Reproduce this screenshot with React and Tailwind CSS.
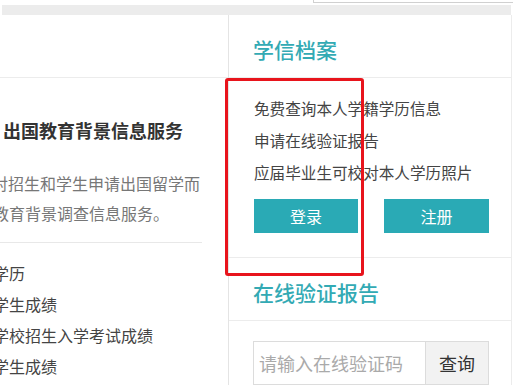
import React from 'react';

const listItems = ['学历', '学生成绩', '学校招生入学考试成绩', '学生成绩'];

const features = ['免费查询本人学籍学历信息', '申请在线验证报告', '应届毕业生可校对本人学历照片'];

export default function App() {
  return (
    <div className="relative w-[513px] h-[386px] overflow-hidden bg-white font-['Noto_Sans_CJK_SC','Noto_Sans',sans-serif]">
      {/* top strip */}
      <div className="h-[5px] flex justify-end">
        <div className="w-[200px] h-[3px] border-l border-b border-[#d0d0d0]" />
      </div>
      <div className="h-[10px] mx-[2px] bg-[#ececec]" />

      <div className="flex">
        {/* left column */}
        <div className="w-[229px] shrink-0 border-r border-[#e4e4e4] overflow-hidden">
          <div className="h-[63px] border-b border-[#ececec]" />
          <h2 className="pt-[40px] pl-[3px] text-[18px] leading-[24px] font-bold text-[#333] whitespace-nowrap">
            出国教育背景信息服务
          </h2>
          <div className="mt-[26px] pb-[14px] w-[202px] border-b border-[#e8e8e8] text-[16px] leading-[30px] text-[#777] whitespace-nowrap">
            <div className="-ml-[8px]">对招生和学生申请出国留学而</div>
            <div className="-ml-[7px]">教育背景调查信息服务。</div>
          </div>
          <ul className="mt-[15px] -ml-[7px] text-[16px] leading-[31px] text-[#444] whitespace-nowrap">
            {listItems.map((item, i) => (
              <li key={i}>{item}</li>
            ))}
          </ul>
        </div>

        {/* right column */}
        <div className="flex-1 mr-[1px] border-r border-[#ececec]">
          <div className="border-b border-[#ececec] pl-[24px] pt-[22px] pb-[16px]">
            <h3 className="text-[21px] leading-[24px] font-medium text-[#33aab4]">学信档案</h3>
          </div>
          <div className="pl-[25px] pt-[14px] pb-[24px] border-b border-[#ececec]">
            {features.map((f) => (
              <div key={f} className="text-[15.6px] leading-[32px] text-[#444] whitespace-nowrap">
                {f}
              </div>
            ))}
            <div className="mt-[11px] flex gap-[26px]">
              <button className="w-[104px] h-[34px] bg-[#2aaab5] text-white text-[16px]">登录</button>
              <button className="w-[105px] h-[34px] bg-[#2aaab5] text-white text-[16px]">注册</button>
            </div>
          </div>
          <div className="border-b border-[#ececec] pl-[24px] pt-[22px] pb-[16px]">
            <h3 className="text-[21px] leading-[24px] font-medium text-[#33aab4]">在线验证报告</h3>
          </div>
          <div className="pl-[24px] pt-[20px] flex">
            <div className="w-[172px] h-[44px] border border-[#dcdcdc] border-r-0 flex items-center pl-[5px] text-[18px] text-[#aaa] whitespace-nowrap">
              请输入在线验证码
            </div>
            <button className="w-[64px] h-[44px] border border-[#dcdcdc] bg-[#f2f2f2] text-[18px] text-[#333]">查询</button>
          </div>
        </div>
      </div>

      {/* red annotation frame */}
      <div className="absolute left-[225px] top-[78px] w-[139px] h-[198px] border-[3px] border-[#e8141c] rounded-[3px]" />
    </div>
  );
}
